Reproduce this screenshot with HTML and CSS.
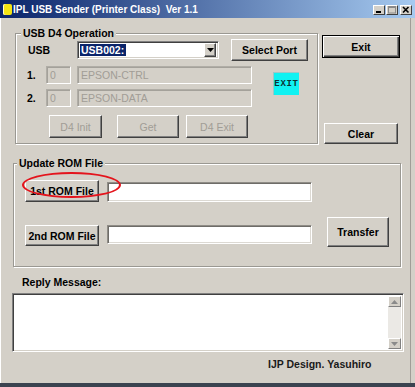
FILE: index.html
```html
<!DOCTYPE html>
<html>
<head>
<meta charset="utf-8">
<title>IPL USB Sender (Printer Class) Ver 1.1</title>
<link rel="stylesheet" href="styles.css">
</head>
<body>
<div class="window">
  <div class="titlebar">
    <span class="app-icon"></span>
    <span class="title">IPL USB Sender (Printer Class)&nbsp; Ver 1.1</span>
    <div class="caption-btns">
      <span class="cbtn"><svg width="10" height="8" viewBox="0 0 10 8"><rect x="2" y="5" width="5" height="2" fill="#000"/></svg></span>
      <span class="cbtn"><svg width="10" height="8" viewBox="0 0 10 8"><rect x="1.5" y="0.5" width="7" height="6.5" fill="none" stroke="#8a8a8a" stroke-width="1"/><rect x="1" y="0" width="8" height="2" fill="#8a8a8a"/></svg></span>
      <span class="cbtn cbtn-close"><svg width="10" height="8" viewBox="0 0 10 8"><path d="M2 1 L7.5 6.5 M7.5 1 L2 6.5" stroke="#000" stroke-width="1.6"/></svg></span>
    </div>
  </div>

  <div class="client">
    <div class="top">
      <fieldset class="group g-usb">
        <legend>USB D4 Operation</legend>
        <div class="row-usb">
          <span class="lbl lbl-usb">USB</span>
          <div class="combo">
            <span class="combo-val"><span class="sel">USB002:</span></span>
            <span class="combo-arrow"><svg width="7" height="4" viewBox="0 0 7 4"><path d="M0 0 H7 L3.5 4 Z" fill="#000"/></svg></span>
          </div>
          <button class="btn btn-select">Select Port</button>
        </div>
        <div class="ep">
          <div class="ep-rows">
            <div class="row-ep">
              <span class="lbl num">1.</span>
              <span class="field dis small">0</span>
              <span class="field dis wide">EPSON-CTRL</span>
            </div>
            <div class="row-ep r2">
              <span class="lbl num">2.</span>
              <span class="field dis small">0</span>
              <span class="field dis wide">EPSON-DATA</span>
            </div>
          </div>
          <div class="exit-badge">EXIT</div>
        </div>
        <div class="row-d4">
          <button class="btn dis b-init">D4 Init</button>
          <button class="btn dis b-get">Get</button>
          <button class="btn dis b-d4exit">D4 Exit</button>
        </div>
      </fieldset>
      <div class="side">
        <button class="btn default btn-exit">Exit</button>
        <button class="btn btn-clear">Clear</button>
      </div>
    </div>

    <fieldset class="group g-rom">
      <legend>Update ROM File</legend>
      <div class="rom-row1">
        <button class="btn btn-rom">1st ROM File</button>
        <span class="field white rom-field"></span>
        <span class="mark"></span>
      </div>
      <div class="rom-row2">
        <button class="btn btn-rom btn-rom2">2nd ROM File</button>
        <span class="field white rom-field rom-field2"></span>
        <button class="btn btn-transfer">Transfer</button>
      </div>
    </fieldset>

    <div class="reply-label">Reply Message:</div>
    <div class="reply">
      <div class="reply-text"></div>
      <div class="vscroll">
        <span class="sbtn"><svg width="7" height="4" viewBox="0 0 7 4"><path d="M0 4 H7 L3.5 0 Z" fill="#8a8a8a"/></svg></span>
        <span class="strack"></span>
        <span class="sbtn"><svg width="7" height="4" viewBox="0 0 7 4"><path d="M0 0 H7 L3.5 4 Z" fill="#8a8a8a"/></svg></span>
      </div>
    </div>
    <div class="credit">IJP Design. Yasuhiro</div>
  </div>
</div>
</body>
</html>
```

FILE: styles.css
```css
* { box-sizing: border-box; }
html, body { margin: 0; padding: 0; }
body {
  width: 415px;
  height: 387px;
  overflow: hidden;
  background: #d4d0c8;
  font-family: "Liberation Sans", Arial, sans-serif;
  font-size: 10.5px;
  color: #000;
}
.window {
  width: 415px;
  height: 387px;
  display: flex;
  flex-direction: column;
  background: #d4d0c8;
  border-bottom: 4px solid #3b4350;
}
.titlebar {
  height: 18px;
  flex: none;
  display: flex;
  align-items: center;
  padding-left: 3px;
  background: linear-gradient(to right, #0a246a 0%, #a6caf0 100%);
}
.app-icon {
  width: 9px;
  height: 11px;
  background: #f4e414;
  border-radius: 2px;
  box-shadow: inset 1px 0 0 #fffbd0;
}
.title {
  margin-left: 1px;
  color: #fff;
  font-weight: bold;
  font-size: 10px;
  white-space: nowrap;
}
.caption-btns {
  margin-left: auto;
  margin-right: 3px;
  display: flex;
  align-self: flex-start;
  margin-top: 5px;
}
.cbtn {
  width: 12px;
  height: 10px;
  display: flex;
  align-items: center;
  justify-content: center;
  background: #d4d0c8;
  border: 1px solid;
  border-color: #fff #404040 #404040 #fff;
  margin-left: 1px;
}
.cbtn-close { margin-left: 2px; }

.client {
  flex: 1;
  display: flex;
  flex-direction: column;
  box-shadow: inset 1px 0 0 #fff, inset -4px 0 0 #d4d0c8, inset -5px 0 0 #a09d97;
}

/* group boxes */
.group {
  margin: 0;
  padding: 0;
  min-inline-size: 0;
  border: 1px solid #9a9892;
  box-shadow: inset 1px 1px 0 #fff, 1px 1px 0 #fff;
}
.group legend {
  padding: 0 2px;
  font-weight: bold;
  line-height: 12px;
  background: #d4d0c8;
}

.top {
  display: flex;
  align-items: flex-start;
  margin-top: 9px;
}
.g-usb {
  margin-left: 15px;
  width: 303px;
  padding-bottom: 5px;
}
.g-usb legend { margin-left: 5px; }

.lbl { font-weight: bold; }

.row-usb {
  display: flex;
  align-items: center;
  height: 22px;
  padding-left: 12px;
}
.lbl-usb { width: 49px; }
.combo {
  width: 142px;
  height: 18px;
  display: flex;
  align-items: center;
  background: #fff;
  border: 1px solid;
  border-color: #808080 #fff #fff #808080;
  box-shadow: inset 1px 1px 0 #404040, inset -1px -1px 0 #d4d0c8;
  padding: 2px;
}
.combo-val { flex: 1; display: flex; }
.sel {
  background: #0a246a;
  color: #fff;
  font-weight: bold;
  line-height: 12px;
  padding: 0 2px 0 1px;
}
.combo-arrow {
  width: 12px;
  height: 14px;
  display: flex;
  align-items: center;
  justify-content: center;
  background: #d4d0c8;
  border: 1px solid;
  border-color: #fff #404040 #404040 #fff;
  box-shadow: inset -1px -1px 0 #808080;
}

.btn {
  font: inherit;
  font-weight: bold;
  color: #000;
  padding: 0;
  margin: 0;
  background: #d4d0c8;
  border: 1px solid;
  border-color: #fff #404040 #404040 #fff;
  box-shadow: inset -1px -1px 0 #808080;
  display: flex;
  align-items: center;
  justify-content: center;
  line-height: 12px;
}
.btn.dis {
  font-weight: normal;
  color: #a19d96;
}
.btn.default {
  border-color: #000;
  box-shadow: inset 1px 1px 0 #fff, inset -1px -1px 0 #404040, inset -2px -2px 0 #808080;
}
.btn-select {
  margin-left: 12px;
  width: 77px;
  height: 22px;
}

.ep {
  display: flex;
  align-items: flex-start;
  margin-top: 5px;
}
.ep-rows {
  display: flex;
  flex-direction: column;
}
.row-ep {
  display: flex;
  align-items: center;
  height: 18px;
  padding-left: 11px;
}
.row-ep.r2 { margin-top: 5px; }
.num { width: 19px; }
.field {
  height: 18px;
  display: flex;
  align-items: center;
  padding-left: 3px;
  border: 1px solid;
  border-color: #8f8c86 #fff #fff #8f8c86;
  box-shadow: inset 1px 1px 0 #6e6c68, inset -1px -1px 0 #dcd9d3;
}
.field.dis {
  background: #d4d0c8;
  color: #a19d96;
  border-color: #b0ada6 #fff #fff #b0ada6;
  box-shadow: inset 1px 1px 0 #a4a19a;
}
.small { width: 25px; }
.wide { width: 175px; margin-left: 6px; }
.exit-badge {
  margin-left: 21px;
  margin-top: 6px;
  width: 26px;
  height: 23px;
  background: #10f2f2;
  display: flex;
  align-items: center;
  justify-content: center;
  font-family: "Liberation Mono", monospace;
  font-weight: bold;
  font-size: 9px;
  letter-spacing: 0.7px;
  color: #0a3434;
  padding-left: 1px;
  box-shadow: inset 1px 1px 0 #9ac8c8;
}

.row-d4 {
  display: flex;
  margin-top: 8px;
  padding-left: 33px;
}
.row-d4 .btn { height: 23px; }
.b-init { width: 53px; }
.b-get { width: 62px; margin-left: 15px; }
.b-d4exit { width: 62px; margin-left: 7px; }

.side {
  margin-left: 4px;
  width: 78px;
  display: flex;
  flex-direction: column;
  align-items: center;
}
.btn-exit {
  margin-top: 8px;
  width: 78px;
  height: 23px;
}
.btn-clear {
  margin-top: 65px;
  width: 74px;
  height: 21px;
}

/* ROM group */
.g-rom {
  margin-top: 13px;
  margin-left: 13px;
  width: 388px;
  padding-bottom: 19px;
}
.g-rom legend { margin-left: 3px; }
.rom-row1 {
  position: relative;
  display: flex;
  align-items: flex-end;
  margin-top: 11px;
  padding-left: 11px;
}
.btn-rom {
  width: 74px;
  height: 22px;
}
.field.white { background: #fff; }
.rom-field {
  width: 205px;
  height: 20px;
  margin-left: 8px;
}
.mark {
  position: absolute;
  left: 8px;
  top: -8px;
  width: 99px;
  height: 26px;
  border: 2px solid #e4141c;
  border-radius: 50%;
}
.rom-row2 {
  display: flex;
  align-items: flex-start;
  margin-top: 15px;
  padding-left: 11px;
}
.btn-rom2 {
  margin-top: 8px;
  height: 21px;
}
.rom-field2 {
  margin-top: 8px;
  height: 19px;
}
.btn-transfer {
  margin-left: 15px;
  width: 62px;
  height: 30px;
}

.reply-label {
  margin-top: 9px;
  padding-left: 22px;
  font-weight: bold;
  line-height: 13px;
}
.reply {
  margin-top: 4px;
  margin-left: 12px;
  width: 392px;
  height: 59px;
  display: flex;
  background: #fff;
  border: 1px solid;
  border-color: #808080 #fff #fff #808080;
  box-shadow: inset 1px 1px 0 #404040, inset -1px -1px 0 #d4d0c8;
  padding: 2px;
}
.reply-text { flex: 1; }
.vscroll {
  width: 13px;
  display: flex;
  flex-direction: column;
}
.sbtn {
  height: 11px;
  display: flex;
  align-items: center;
  justify-content: center;
  background: #d4d0c8;
  border: 1px solid;
  border-color: #fff #808080 #808080 #fff;
}
.strack {
  flex: 1;
  background: #ebe9e5;
}
.credit {
  margin-top: 6px;
  padding-left: 268px;
  font-weight: bold;
  line-height: 13px;
  color: #1a1a1a;
}
```
